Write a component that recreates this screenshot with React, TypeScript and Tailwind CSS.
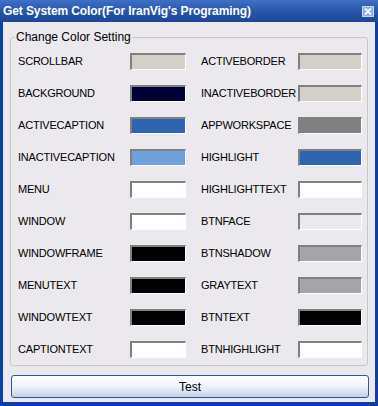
import React from "react";

const left: [string, string][] = [
  ["SCROLLBAR", "#d4d0c8"],
  ["BACKGROUND", "#000038"],
  ["ACTIVECAPTION", "#3164b0"],
  ["INACTIVECAPTION", "#6fa2dc"],
  ["MENU", "#ffffff"],
  ["WINDOW", "#ffffff"],
  ["WINDOWFRAME", "#000000"],
  ["MENUTEXT", "#000000"],
  ["WINDOWTEXT", "#000000"],
  ["CAPTIONTEXT", "#ffffff"],
];
const right: [string, string][] = [
  ["ACTIVEBORDER", "#d4d0c8"],
  ["INACTIVEBORDER", "#d4d0c8"],
  ["APPWORKSPACE", "#808080"],
  ["HIGHLIGHT", "#3164b0"],
  ["HIGHLIGHTTEXT", "#ffffff"],
  ["BTNFACE", "#ebe9ed"],
  ["BTNSHADOW", "#a5a5a8"],
  ["GRAYTEXT", "#a5a5a8"],
  ["BTNTEXT", "#000000"],
  ["BTNHIGHLIGHT", "#ffffff"],
];

function Swatch({ color, w }: { color: string; w: string }) {
  return (
    <div
      className={`${w} h-[17px] shrink-0 border-t-2 border-l-2 border-t-[#808080] border-l-[#808080] border-b border-r border-b-white border-r-white`}
      style={{ backgroundColor: color }}
    />
  );
}

export default function App() {
  return (
    <div
      className="w-[378px] h-[406px] flex flex-col bg-[#0b3fa8]"
      style={{ fontFamily: '"Liberation Sans", Arial, sans-serif' }}
    >
      <div className="h-[22px] flex items-center justify-between pl-[3px] pr-[4px] bg-gradient-to-b from-[#3f70c6] via-[#2856ab] to-[#1d4795]">
        <span className="text-white font-bold text-[12px] tracking-[-0.1px]">
          Get System Color(For IranVig's Programing)
        </span>
        <div className="w-[12px] h-[11px] bg-[#8fb0e6] border border-[#c8d8f4] flex items-center justify-center">
          <svg width="8" height="7" viewBox="0 0 8 7">
            <path d="M1 0.5 L7 6.5 M7 0.5 L1 6.5" stroke="white" strokeWidth="1.8" />
          </svg>
        </div>
      </div>
      <div className="flex-1 mx-[3px] mb-[4px] bg-[#ebe9ed] flex flex-col pt-[15px] px-[7px]">
        <div className="relative border border-[#c9c7c3] rounded-[3px] h-[329px] pt-[15px]">
          <span className="absolute left-[4px] top-[-8px] bg-[#ebe9ed] px-[1px] text-[12px] leading-[14px] text-black">
            Change Color Setting
          </span>
          <div className="flex flex-col gap-[15px]">
            {left.map((l, i) => (
              <div key={l[0]} className="h-[17px] flex items-center text-[11px] tracking-[-0.2px] text-black">
                <span className="w-[119px] shrink-0 pl-[7px] whitespace-nowrap">{l[0]}</span>
                <Swatch color={l[1]} w="w-[56px]" />
                <span className="w-[112px] shrink-0 pl-[15px] whitespace-nowrap">{right[i][0]}</span>
                <Swatch color={right[i][1]} w="w-[64px]" />
              </div>
            ))}
          </div>
        </div>
        <button className="mt-[9px] ml-[1px] w-[358px] h-[23px] rounded-[3px] border border-[#2c55a8] bg-gradient-to-b from-white via-[#eef2f8] to-[#c4d2e8] text-[12px] text-black flex items-center justify-center">
          Test
        </button>
      </div>
    </div>
  );
}
